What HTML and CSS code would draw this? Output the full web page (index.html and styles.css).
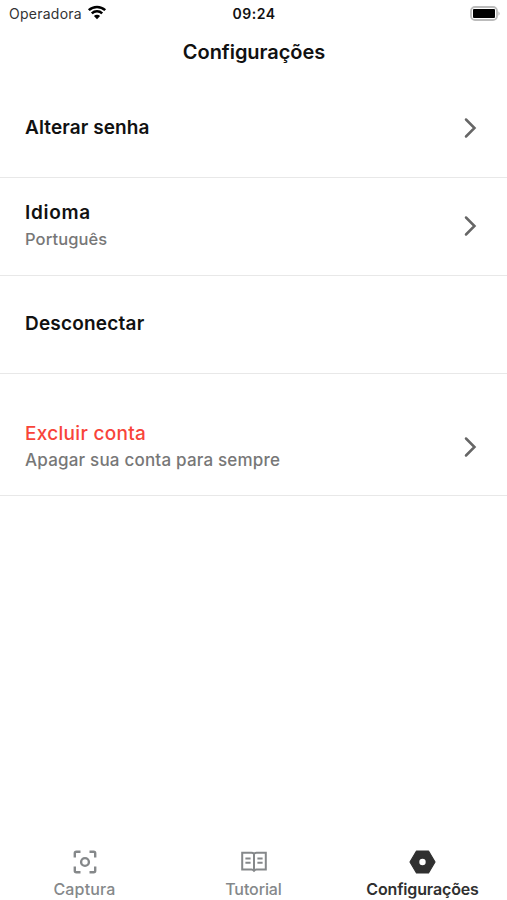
FILE: index.html
```html
<!DOCTYPE html>
<html lang="pt">
<head>
  <meta charset="UTF-8">
  <meta name="viewport" content="width=device-width, initial-scale=1.0">
  <title>Configurações</title>
  <link rel="stylesheet" href="styles.css">
</head>
<body>
  <div class="screen">
    <div class="status-bar">
      <div class="carrier">
        <span class="carrier-name">Operadora</span>
        <svg class="wifi" width="20" height="15" viewBox="0 0 20 15">
          <path d="M1.8 5.2a11.8 11.8 0 0 1 16.4 0M4.8 8.3a7.5 7.5 0 0 1 10.4 0" fill="none" stroke="#000" stroke-width="2.5"/>
          <path d="M10 14.2l-3.1-3.1a4.4 4.4 0 0 1 6.2 0z"/>
        </svg>
      </div>
      <span class="time">09:24</span>
      <svg class="battery" width="31" height="15" viewBox="0 0 31 15">
        <rect x="1" y="1" width="26" height="13" rx="4" fill="#fff" stroke="#bbb" stroke-width="1.8"/>
        <rect x="3" y="3" width="22" height="9" rx="1"/>
        <path d="M28.5 5.2q2.2 2.3 0 4.6z" fill="#aaa"/>
      </svg>
    </div>

    <h1 class="title">Configurações</h1>

    <ul class="settings">
      <li class="item">
        <div class="item-text"><span class="item-label password">Alterar senha</span></div>
        <svg class="chevron" width="14" height="22" viewBox="0 0 14 22"><path d="M2 2.5l8.5 8.5L2 19.5"/></svg>
      </li>
      <li class="item">
        <div class="item-text">
          <span class="item-label language">Idioma</span>
          <span class="item-note">Português</span>
        </div>
        <svg class="chevron" width="14" height="22" viewBox="0 0 14 22"><path d="M2 2.5l8.5 8.5L2 19.5"/></svg>
      </li>
      <li class="item">
        <div class="item-text"><span class="item-label logout">Desconectar</span></div>
      </li>
      <li class="item item-delete">
        <div class="item-text">
          <span class="item-label danger">Excluir conta</span>
          <span class="item-note long">Apagar sua conta para sempre</span>
        </div>
        <svg class="chevron" width="14" height="22" viewBox="0 0 14 22"><path d="M2 2.5l8.5 8.5L2 19.5"/></svg>
      </li>
    </ul>

    <nav class="tabs">
      <a class="tab">
        <svg width="28" height="28" viewBox="0 0 28 28" fill="none" stroke="currentColor" stroke-width="2.4">
          <path d="M3.8 9.5V5.3q0-1.5 1.5-1.5H9.5M18.5 3.8h4.2q1.5 0 1.5 1.5v4.2M24.2 18.5v4.2q0 1.5-1.5 1.5h-4.2M9.5 24.2H5.3q-1.5 0-1.5-1.5v-4.2"/>
          <circle cx="14" cy="14" r="3.9"/>
        </svg>
        <span class="capture">Captura</span>
      </a>
      <a class="tab">
        <svg width="28" height="28" viewBox="0 0 28 28" fill="none" stroke="currentColor" stroke-width="2">
          <path d="M14 5.8Q13 4.8 11.5 4.8H2.2v16.8h9.3q1.5 0 2.5 1.2 1-1.2 2.5-1.2h9.3V4.8h-9.3Q15 4.8 14 5.8zM14 5.8v17"/>
          <path d="M5.4 10.4h5.2M5.4 14.8h5.2M17.4 10.4h5.2M17.4 14.8h5.2"/>
        </svg>
        <span class="tutorial">Tutorial</span>
      </a>
      <a class="tab active">
        <svg width="28" height="28" viewBox="0 0 28 28">
          <path d="M7.5 3h12l6.5 11-6.5 11h-12L1 14z" fill="currentColor" stroke="currentColor" stroke-width="1.2" stroke-linejoin="round"/>
          <circle cx="13.5" cy="14" r="3.2" fill="#fff"/>
        </svg>
        <span class="config">Configurações</span>
      </a>
    </nav>
  </div>
</body>
</html>
```

FILE: styles.css
```css
* {
  box-sizing: border-box;
}
body {
  margin: 0;
  background: #fff;
  color: #111;
  font-family: Inter, "Liberation Sans", sans-serif;
}
.screen {
  display: flex;
  flex-direction: column;
  height: 900px;
}
.status-bar {
  display: grid;
  grid-template-columns: 1fr auto 1fr;
  align-items: center;
  height: 27px;
  padding: 0 6px 0 9px;
  font-size: 14px;
}
.carrier {
  display: flex;
  align-items: center;
  gap: 5px;
  color: #333;
}
.carrier-name {
  letter-spacing: 0.25px;
}
.wifi {
  margin-top: -2px;
}
.time {
  margin-right: 2px;
  font-weight: 600;
  letter-spacing: 0.5px;
}
.battery {
  justify-self: end;
}
.title {
  margin: 0;
  height: 53px;
  line-height: 50px;
  text-align: center;
  text-indent: 1px;
  font-size: 20px;
  font-weight: 600;
  letter-spacing: -0.05px;
}
.settings {
  flex: 1;
  margin: 0;
  padding: 0;
  list-style: none;
}
.item {
  display: flex;
  align-items: center;
  justify-content: space-between;
  height: 98px;
  padding: 0 29px 0 25px;
  border-bottom: 1px solid #e8e8e8;
}
.item-delete {
  height: 122px;
  padding-top: 27px;
}
.item-text {
  display: flex;
  flex-direction: column;
  padding-bottom: 2px;
}
.item-label {
  font-size: 19px;
  line-height: 26px;
  font-weight: 600;
}
.password {
  letter-spacing: 0.1px;
}
.language {
  letter-spacing: 0.7px;
}
.logout {
  letter-spacing: 0.2px;
}
.item-note {
  font-size: 16.5px;
  line-height: 26px;
  font-weight: 500;
  letter-spacing: 0.1px;
  color: #777;
}
.long {
  font-size: 17px;
  letter-spacing: 0.2px;
}
.danger {
  color: #f8443a;
  font-weight: 500;
  letter-spacing: 0.3px;
}
.chevron {
  margin-bottom: 2px;
  fill: none;
  stroke: #666;
  stroke-width: 2.5;
  stroke-linecap: round;
}
.tabs {
  display: grid;
  grid-template-columns: repeat(3, 1fr);
  height: 52px;
}
.tab {
  display: flex;
  flex-direction: column;
  align-items: center;
  color: #85888a;
  font-size: 16px;
  line-height: 26px;
  font-weight: 500;
}
.capture {
  letter-spacing: 0.15px;
}
.tutorial {
  letter-spacing: -0.1px;
}
.active {
  color: #303030;
  font-weight: 600;
}
.config {
  letter-spacing: -0.15px;
}
```
